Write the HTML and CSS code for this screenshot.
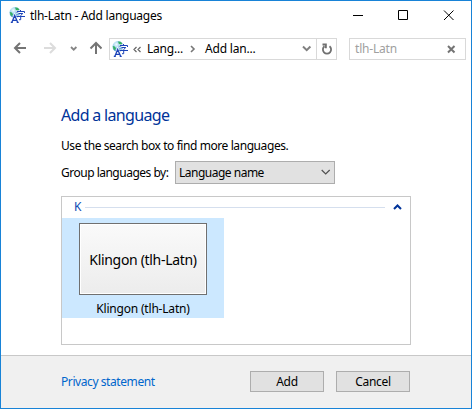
FILE: index.html
```html
<!DOCTYPE html>
<html lang="en">
<head>
<meta charset="utf-8">
<title>tlh-Latn - Add languages</title>
<link rel="stylesheet" href="styles.css">
</head>
<body>
<svg class="defs" width="0" height="0" aria-hidden="true">
  <defs>
    <radialGradient id="globe" cx=".35" cy=".3" r=".75">
      <stop offset="0" stop-color="#f2fcff"/><stop offset=".5" stop-color="#8cc8e8"/><stop offset="1" stop-color="#3b7fc0"/>
    </radialGradient>
    <symbol id="lang" viewBox="0 0 16 16">
      <circle cx="6" cy="5.600" r="5.500" fill="url(#globe)"/>
      <path d="M6 .4l2.500.3 1.800 1.600-1.300 1.700-2-.7zM.8 5l2 .5 1.200 1.800-1 1.700-1.400-.5z" fill="#35b060"/>
      <path d="M2.800 15.500 5.700 8.500l3 7M3.800 13.300h4" fill="none" stroke="#fff" stroke-width="2.600"/>
      <path d="M2.800 15.500 5.700 8.500l3 7M1.800 15.400h2M7.700 15.400h2M3.800 13.300h4" fill="none" stroke="#1b43b8" stroke-width="1.300"/>
      <path d="M11.500 3v1.500M8 6.500v-2h7.500v2M9.500 6.500h4.300L11.700 8.500v4.200h-1.700M7.500 9.500h8.500" fill="none" stroke="#fff" stroke-width="2"/>
      <path d="M11.500 3v1.500M8 6V4.500h7.500V6M9.500 6.500h4.300L11.700 8.500v4.200h-1.700M7.500 9.500h8.500" fill="none" stroke="#1b43b8"/>
    </symbol>
  </defs>
</svg>
<div class="window">
  <header class="titlebar">
    <svg class="app-icon" width="16" height="16"><use href="#lang"/></svg>
    <span class="title">tlh-Latn - Add languages</span>
    <svg class="controls" width="101" height="11" viewBox="0 0 101 11" fill="none" stroke="#000">
      <path d="M0 5.500h10"/><path d="M45.500.5h9v9h-9z"/><path d="M91 .5l9.500 9.500M100.500 .5 91 10"/>
    </svg>
  </header>
  <nav class="navbar">
    <svg class="arrows" width="90" height="22" viewBox="0 0 90 22" fill="none" stroke-width="2">
      <path d="M14 10H3M8 5l-5 5 5 5" stroke="#747474"/>
      <path d="M32 10h11M38 5l5 5-5 5" stroke="#dcdcdc"/>
      <path d="M59 9l2.700 2.700L64.400 9" stroke="#858585" stroke-width="1.800"/>
      <path d="M84 16V5M78.500 10.500l5.500-5.500 5.500 5.500" stroke="#747474"/>
    </svg>
    <div class="address">
      <svg class="crumb-icon" width="16" height="16"><use href="#lang"/></svg>
      <svg class="back-crumbs" width="9" height="8" fill="none" stroke="#666" stroke-width="1.200"><path d="M3.500 1 1 3.500 3.500 6M7.500 1 5 3.500 7.500 6"/></svg>
      <span class="crumb crumb-a">Lang...</span>
      <svg class="sep" width="6" height="8" fill="none" stroke="#777" stroke-width="1.600"><path d="M1 1l3 3-3 3"/></svg>
      <span class="crumb crumb-b">Add lan...</span>
      <svg class="history" width="10" height="8" fill="none" stroke="#808080" stroke-width="2"><path d="M1 1.500l3.700 3.700L8.400 1.500"/></svg>
      <span class="refresh"><svg width="12" height="12" viewBox="0 0 12 12" fill="none" stroke="#707070" stroke-width="1.800"><path d="M8.500 3.300A4.100 4.100 0 1 1 3.500 3.300M1.500 1.500h3.400v3.700"/></svg></span>
    </div>
    <div class="search"><span>tlh-Latn</span><svg width="9" height="9" fill="none" stroke="#747474" stroke-width="2"><path d="M1 1l6.500 6.500M7.500 1 1 7.500"/></svg></div>
  </nav>
  <main class="content">
    <h1>Add a language</h1>
    <p class="hint">Use the search box to find more languages.</p>
    <div class="group-row">
      <span class="group-label">Group languages by:</span>
      <div class="select"><span>Language name</span><svg width="10" height="7" fill="none" stroke="#505050" stroke-width="1.200"><path d="M.7 1 4.700 5l4-4"/></svg></div>
    </div>
    <section class="list">
      <div class="list-head"><span class="letter">K</span><i class="rule"></i><svg width="9" height="6" fill="none" stroke="#003399" stroke-width="2"><path d="M1 5l3.500-3.500L8 5"/></svg></div>
      <div class="tile"><div class="preview"><span>Klingon (tlh-Latn)</span></div><div class="caption">Klingon (tlh-Latn)</div></div>
    </section>
  </main>
  <footer class="footer">
    <a class="privacy">Privacy statement</a>
    <div class="button add">Add</div>
    <div class="button cancel">Cancel</div>
  </footer>
</div>
</body>
</html>
```
FILE: styles.css
```css
* { box-sizing: border-box; }
body { margin: 0; font: 12px/16px "Noto Sans", "Open Sans", sans-serif; letter-spacing: -.3px; color: #000; }
svg { display: block; flex: none; }
span, a { white-space: nowrap; }
.defs { position: absolute; }
.window { width: 472px; height: 409px; border: 1px solid #1883d7; background: #fff; display: flex; flex-direction: column; }
.titlebar { height: 37px; display: flex; align-items: flex-start; padding: 6px 17px 0 8px; }
.title { margin: 1px 0 0 5px; letter-spacing: -.24px; }
.controls { margin: 3px 0 0 auto; }
.navbar { height: 22px; display: flex; padding: 0 5px 0 11px; }
.arrows { margin-right: 7px; }
.address { width: 228px; height: 22px; border: 1px solid #d9d9d9; display: flex; align-items: center; letter-spacing: -.2px; }
.crumb-icon { margin-left: 2px; }
.back-crumbs { margin: 1px 5px 0 5px; }
.crumb-a { width: 39px; }
.sep { margin-left: 4px; }
.crumb-b { margin-left: 9px; }
.history { margin-left: auto; margin-right: 4px; }
.refresh { align-self: stretch; width: 20px; border-left: 1px solid #d9d9d9; display: flex; align-items: center; justify-content: center; }
.search { width: 117px; height: 22px; margin-left: auto; border: 1px solid #d9d9d9; display: flex; align-items: center; justify-content: space-between; padding: 0 9px 0 5px; color: #a0a0a0; letter-spacing: -.2px; }
.content { height: 295px; padding: 44px 60px 0; }
h1 { margin: 0; font-size: 16px; font-weight: 400; line-height: 22px; letter-spacing: -.68px; color: #003399; }
.hint { margin: 12px 0 0; letter-spacing: -.42px; }
.group-row { display: flex; align-items: center; margin-top: 7px; height: 23px; letter-spacing: -.5px; }
.group-label { width: 114px; }
.select { width: 160px; height: 23px; border: 1px solid #adadad; background: #e1e1e1; display: flex; align-items: center; justify-content: space-between; padding: 0 3px; }
.list { width: 350px; height: 149px; margin-top: 12px; border: 1px solid #c8c8c8; }
.list-head { height: 21px; display: flex; align-items: center; padding: 0 8px 1px 12px; color: #0f4cb5; }
.letter { width: 11px; }
.rule { width: 300px; height: 1px; background: #d5dfee; }
.list-head svg { margin-left: auto; }
.tile { width: 162px; height: 100px; background: #cce8ff; padding: 5px 17px 0; }
.preview { height: 72px; border: 1px solid #707070; box-shadow: inset 0 0 0 1px #fff; background: linear-gradient(#fafafa, #ececec); display: flex; align-items: center; justify-content: center; font-size: 14px; padding-top: 2px; letter-spacing: -.32px; }
.caption { margin-top: 6px; text-align: center; white-space: nowrap; letter-spacing: -.2px; }
.footer { flex: 1; border-top: 1px solid #c8c8c8; background: #f0f0f0; display: flex; align-items: flex-start; padding: 15px 60px 0; }
.privacy { width: 189px; margin-top: 3px; color: #0066cc; letter-spacing: -.42px; }
.button { width: 74px; height: 21px; border: 1px solid #adadad; background: #e1e1e1; text-align: center; line-height: 20px; }
.cancel { margin-left: 12px; }
```
